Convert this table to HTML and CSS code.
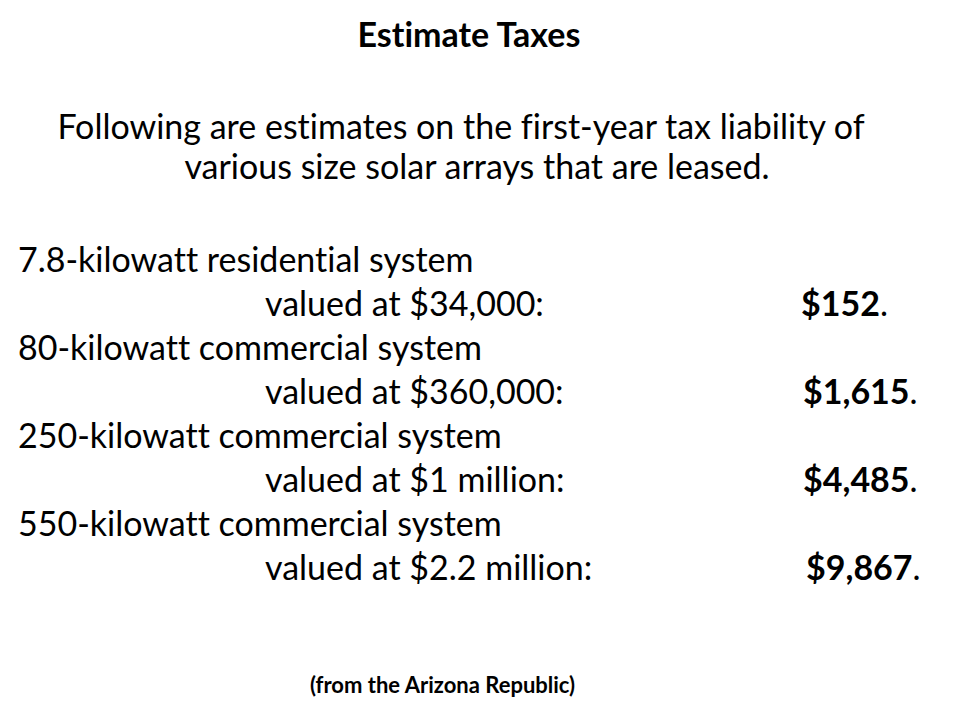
FILE: index.html
```html
<!DOCTYPE html>
<html>
<head>
<meta charset="utf-8">
<title>Estimate Taxes</title>
<link rel="stylesheet" href="styles.css">
</head>
<body>
<main class="slide">
  <h1 class="title">Estimate Taxes</h1>
  <p class="intro"><span class="intro-line first">Following are estimates on the first-year tax liability of</span><span class="intro-line second">various size solar arrays that are leased.</span></p>
  <div class="list">
    <div class="system">7.8-kilowatt residential system</div>
    <div class="row"><span class="value">valued at $34,000:</span><span class="amount a1"><b>$152</b>.</span></div>
    <div class="system">80-kilowatt commercial system</div>
    <div class="row"><span class="value">valued at $360,000:</span><span class="amount a2"><b>$1,615</b>.</span></div>
    <div class="system">250-kilowatt commercial system</div>
    <div class="row"><span class="value">valued at $1 million:</span><span class="amount a2"><b>$4,485</b>.</span></div>
    <div class="system">550-kilowatt commercial system</div>
    <div class="row"><span class="value">valued at $2.2 million:</span><span class="amount a3"><b>$9,867</b>.</span></div>
  </div>
  <p class="source">(from the Arizona Republic)</p>
</main>
</body>
</html>
```

FILE: styles.css
```css
html, body {
  margin: 0;
  padding: 0;
  background: #ffffff;
}
.slide {
  width: 960px;
  height: 720px;
  overflow: hidden;
  font-family: Lato, "Open Sans", sans-serif;
  font-variant-ligatures: none;
  color: #000000;
  display: flex;
  flex-direction: column;
}
.title {
  margin: 14px 0 0 0;
  font-size: 34px;
  line-height: 40px;
  font-weight: 700;
  text-align: center;
  padding-right: 22px;
}
.intro {
  margin: 52px 0 0 0;
  font-size: 34px;
  line-height: 40px;
  text-align: center;
}
.intro-line {
  display: block;
  white-space: nowrap;
}
.intro-line.first {
  padding-right: 38px;
}
.intro-line.second {
  padding-right: 6px;
}
.list {
  margin: 51px 0 0 18px;
  font-size: 34px;
  line-height: 44px;
}
.system {
  white-space: nowrap;
}
.row {
  display: flex;
  white-space: nowrap;
}
.value {
  width: 537px;
  margin-left: 247px;
}
.amount b {
  font-weight: 700;
}
.a1 { margin-left: -1px; }
.a2 { margin-left: 1px; }
.a3 { margin-left: 4px; }
.source {
  margin: 84px 0 0 0;
  font-size: 22px;
  line-height: 24px;
  font-weight: 700;
  text-align: center;
  padding-right: 75px;
}
```
